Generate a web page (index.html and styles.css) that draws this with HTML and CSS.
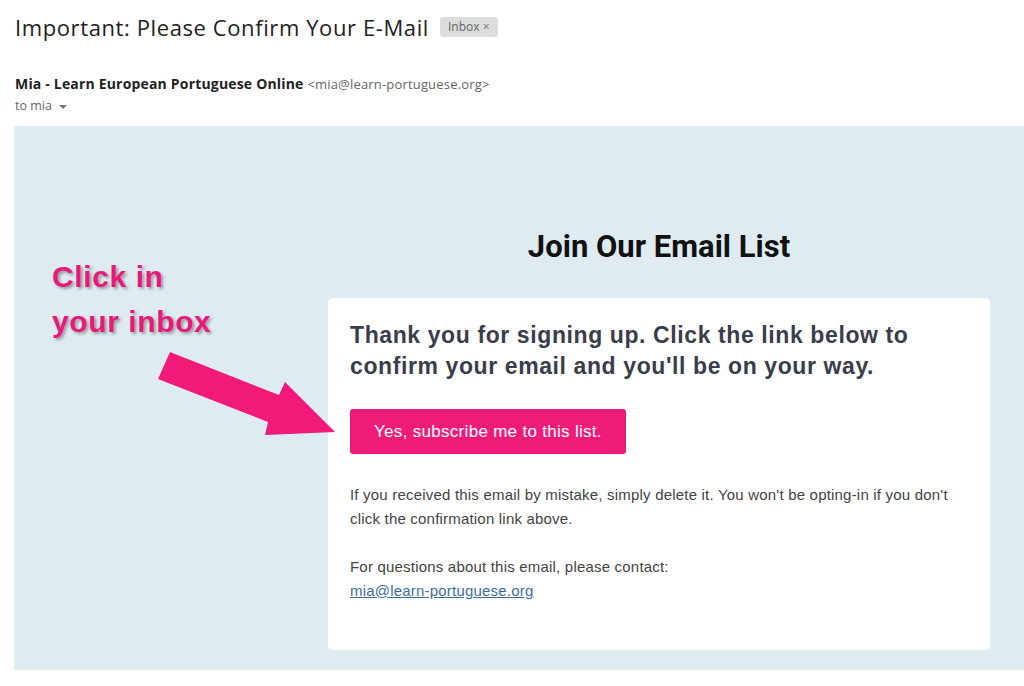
FILE: index.html
```html
<!DOCTYPE html>
<html>
<head>
  <title>Important: Please Confirm Your E-Mail</title>
  <link rel="stylesheet" href="styles.css">
</head>
<body>
  <header class="mail-head">
    <h1 class="subject">Important: Please Confirm Your E-Mail <span class="label">Inbox <span class="label-x">&times;</span></span></h1>
    <div class="sender">
      <span class="sender-name">Mia - Learn European Portuguese Online</span>
      <span class="sender-mail">&lt;mia@learn-portuguese.org&gt;</span>
    </div>
    <div class="recipient">to mia <span class="caret"></span></div>
  </header>

  <div class="panel">
    <div class="note">
      <p class="note-text">Click in<br>your inbox</p>
      <svg class="note-arrow" width="200" height="100" viewBox="0 0 200 100">
        <polygon points="26,2 135,45 141,32 191,82 121,85 124,72 14,29" fill="#f21a78"/>
      </svg>
    </div>

    <div class="main">
      <h2 class="list-title">Join Our Email List</h2>
      <div class="card">
        <h3>Thank you for signing up. Click the link below to confirm your email and you'll be on your way.</h3>
        <a class="btn" href="#">Yes, subscribe me to this list.</a>
        <p>If you received this email by mistake, simply delete it. You won't be opting-in if you don't click the confirmation link above.</p>
        <p>For questions about this email, please contact:<br><a class="mail-link" href="#">mia@learn-portuguese.org</a></p>
      </div>
    </div>
  </div>
</body>
</html>
```

FILE: styles.css
```css
body {
  margin: 0;
  padding: 0;
  background-color: #ffffff;
  font-family: Roboto, Arial, sans-serif;
  color: #222222;
}
.mail-head {
  padding: 12px 15px 0 15px;
  height: 114px;
  box-sizing: border-box;
  font-family: "Open Sans", Roboto, sans-serif;
}
.subject {
  margin: 0;
  font-size: 22px;
  font-weight: 400;
  letter-spacing: 0.6px;
  color: #222222;
  line-height: 30px;
  display: flex;
  align-items: center;
  gap: 11px;
}
.label {
  background-color: #dddddd;
  color: #666666;
  font-size: 12px;
  letter-spacing: 0;
  line-height: 20px;
  padding: 0 8px;
  border-radius: 3px;
}
.label-x {
  color: #777777;
}
.sender {
  margin-top: 33px;
  font-size: 14px;
  line-height: 18px;
  letter-spacing: 0.18px;
}
.sender-name {
  font-weight: 700;
  color: #222222;
}
.sender-mail {
  font-size: 13px;
  color: #666666;
}
.recipient {
  margin-top: 5px;
  font-size: 12.5px;
  color: #666666;
  line-height: 16px;
}
.caret {
  display: inline-block;
  margin-left: 4px;
  vertical-align: middle;
  border-left: 4px solid transparent;
  border-right: 4px solid transparent;
  border-top: 4px solid #777777;
}
.panel {
  margin: 12px 0 0 14px;
  height: 544px;
  background-color: #deecf1;
  display: flex;
  box-sizing: border-box;
  padding-top: 104px;
}
.note {
  width: 314px;
  position: relative;
}
.note-text {
  margin: 24px 0 0 38px;
  font-family: "Liberation Sans", Arial, sans-serif;
  font-weight: 700;
  font-size: 30px;
  letter-spacing: 0.6px;
  line-height: 45px;
  color: #e8197a;
  text-shadow: 2px 2px 3px rgba(90, 90, 90, 0.55);
}
.note-arrow {
  position: absolute;
  left: 130px;
  top: 120px;
}
.main {
  width: 662px;
}
.list-title {
  margin: 0;
  text-align: center;
  font-size: 31px;
  line-height: 34px;
  font-weight: 700;
  color: #111111;
}
.card {
  margin-top: 34px;
  background-color: #ffffff;
  border-radius: 5px;
  padding: 22px 22px 47px 22px;
  font-family: "Liberation Sans", Arial, sans-serif;
}
.card h3 {
  margin: 0;
  font-size: 23px;
  line-height: 31px;
  font-weight: 700;
  letter-spacing: 0.6px;
  color: #3a3d4a;
}
.btn {
  display: inline-block;
  margin-top: 27px;
  background-color: #ef1b78;
  color: #ffffff;
  text-decoration: none;
  font-size: 17px;
  line-height: 45px;
  padding: 0 24px;
  border-radius: 3px;
  letter-spacing: 0.3px;
}
.card p {
  margin: 29px 0 0 0;
  font-size: 15px;
  line-height: 24px;
  color: #444444;
  letter-spacing: 0.2px;
}
.card p + p {
  margin-top: 24px;
}
.mail-link {
  color: #3c6fa0;
}
```
